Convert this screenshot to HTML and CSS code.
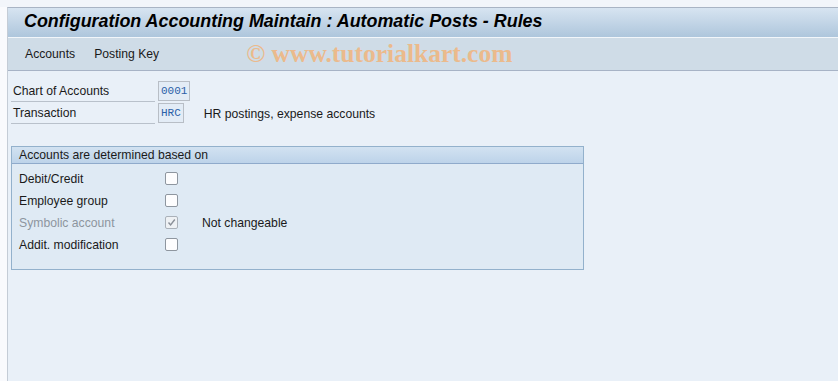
FILE: index.html
```html
<!DOCTYPE html>
<html lang="en">
<head>
    <meta charset="UTF-8">
    <title>Configuration Accounting Maintain : Automatic Posts - Rules</title>
    <link rel="stylesheet" href="styles.css">
</head>
<body>
    <div class="topStrip"></div>
    <div class="frame">
        <div class="titleBar">
            <h1>Configuration Accounting Maintain : Automatic Posts - Rules</h1>
        </div>
        <div class="toolbar">
            <span class="menuItem">Accounts</span>
            <span class="menuItem">Posting Key</span>
            <span class="watermark">&copy; www.tutorialkart.com</span>
        </div>

        <div class="content">
            <div class="fieldRow">
                <label class="fieldLabel">Chart of Accounts</label>
                <span class="fieldInput wide">0001</span>
            </div>
            <div class="fieldRow">
                <label class="fieldLabel">Transaction</label>
                <span class="fieldInput">HRC</span>
                <span class="fieldText">HR postings, expense accounts</span>
            </div>

            <div class="groupBox">
                <div class="groupHeader">Accounts are determined based on</div>
                <div class="groupBody">
                    <div class="checkRow">
                        <span class="checkLabel">Debit/Credit</span>
                        <span class="checkBox"></span>
                    </div>
                    <div class="checkRow">
                        <span class="checkLabel">Employee group</span>
                        <span class="checkBox"></span>
                    </div>
                    <div class="checkRow">
                        <span class="checkLabel disabled">Symbolic account</span>
                        <span class="checkBox checked">
                            <svg width="9" height="9" viewBox="0 0 9 9"><path d="M1.5 4.5 L3.6 7 L7.8 1.5" fill="none" stroke="#8a9098" stroke-width="1.4"/></svg>
                        </span>
                        <span class="checkNote">Not changeable</span>
                    </div>
                    <div class="checkRow">
                        <span class="checkLabel">Addit. modification</span>
                        <span class="checkBox"></span>
                    </div>
                </div>
            </div>
        </div>
    </div>
</body>
</html>
```

FILE: styles.css
```css
/* SAP GUI style screen */
html, body {
    margin: 0;
    height: 100%;
    background: #f9fafd;
    font-family: "Liberation Sans", Arial, sans-serif;
    font-size: 12.2px;
    color: #1a1a1a;
}
.topStrip {
    height: 7px;
    background: #f2f5fa;
}
.frame {
    margin-left: 7px;
    height: calc(100% - 7px);
    border-left: 1px solid #c4ccd6;
    border-top: 1px solid #a9b4c4;
    background: #e9f0f8;
    box-sizing: border-box;
}
.titleBar {
    height: 29px;
    display: flex;
    align-items: center;
    padding-left: 16px;
    background: linear-gradient(#d7e4f1, #aec6dc);
    border-bottom: 1px solid #f2f6fa;
}
.titleBar h1 {
    margin: 0;
    margin-top: -2px;
    font-size: 17.9px;
    font-weight: bold;
    font-style: italic;
    color: #000;
}
.toolbar {
    height: 32px;
    display: flex;
    align-items: center;
    padding-left: 17px;
    background: #cfdce7;
    border-bottom: 1px solid #a7b3c6;
}
.menuItem {
    margin-right: 19px;
    color: #1a1a1a;
}
.watermark {
    margin-left: 68px;
    font-family: "Liberation Serif", "Times New Roman", serif;
    font-weight: bold;
    font-size: 25.5px;
    color: #ebba8c;
}
.content {
    padding: 9px 0 0 3px;
}
.fieldRow {
    display: flex;
    align-items: center;
    height: 22px;
}
.fieldLabel {
    width: 142px;
    height: 20px;
    line-height: 21px;
    padding: 1px 0 0 2px;
    border-bottom: 1px solid #b9c1cb;
    margin-right: 3px;
}
.fieldInput {
    height: 18px;
    line-height: 18px;
    padding: 0 2px;
    border: 1px solid #b8bec6;
    background: #e3ecf6;
    font-family: "Liberation Mono", "Courier New", monospace;
    font-size: 11px;
    color: #2a5fa8;
}
.fieldText {
    margin-left: 20px;
    padding-top: 1px;
}
.groupBox {
    margin-top: 22px;
    width: 571px;
    border: 1px solid #93b1cc;
    background: #dfeaf4;
}
.groupHeader {
    height: 16px;
    line-height: 17px;
    padding-left: 7px;
    background: linear-gradient(#d2e2f1, #bdd3e9);
    border-bottom: 1px solid #8faacb;
}
.groupBody {
    padding: 3px 0 14px 7px;
}
.checkRow {
    display: flex;
    align-items: center;
    height: 22px;
}
.checkLabel {
    width: 146px;
    padding-top: 2px;
}
.checkLabel.disabled {
    color: #8d959e;
}
.checkBox {
    width: 11px;
    height: 11px;
    border: 1px solid #8e969f;
    border-radius: 2px;
    background: #fdfdfe;
    display: flex;
    align-items: center;
    justify-content: center;
}
.checkBox.checked {
    background: #eef1f4;
    border-color: #aab1b9;
}
.checkNote {
    margin-left: 24px;
    padding-top: 2px;
}
```
